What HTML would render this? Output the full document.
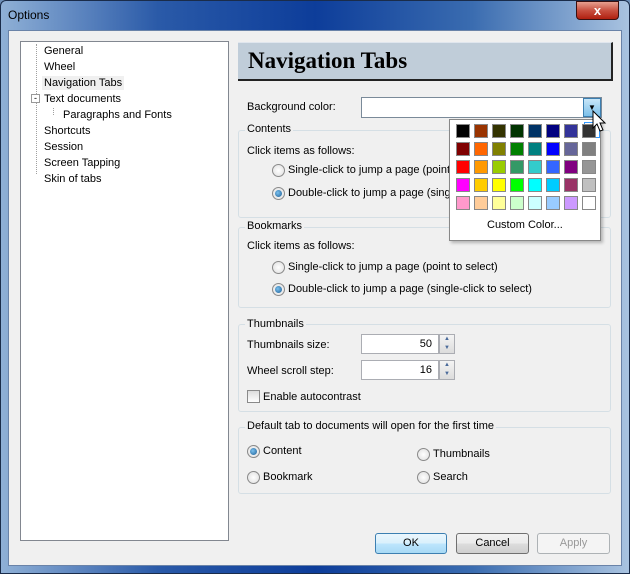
<!DOCTYPE html>
<html><head><style>
*{box-sizing:border-box;margin:0;padding:0}
body{width:630px;height:574px;overflow:hidden;font:11px "Liberation Sans",sans-serif;color:#000;background:#6d8fb8;position:relative}
.a{position:absolute;white-space:nowrap}
.frame{left:0;top:0;width:630px;height:574px;background:linear-gradient(90deg,#8fb0d6 0%,#2a5aa8 25%,#0d3d9a 50%,#3a6cb0 75%,#a9c3e0 100%);border:1px solid #1a2c4a;border-radius:6px 6px 0 0}
.client{left:8px;top:30px;width:614px;height:536px;background:#f0f0f0;border:1px solid #6a83a8}
.grp{border:1px solid #d5dfe5;border-radius:3px}
.rad{width:13px;height:13px;border-radius:50%;border:1px solid #8a8a8a;background:radial-gradient(circle,#fff,#ddd)}
.rad.on::after{content:"";position:absolute;left:2px;top:2px;width:7px;height:7px;border-radius:50%;background:radial-gradient(circle at 40% 40%,#7ac0ee,#1b5d94)}
.btn{height:21px;border:1px solid #707070;border-radius:3px;background:linear-gradient(#f2f2f2,#ebebeb 50%,#dddddd 50%,#cfcfcf);text-align:center;line-height:19px;font-size:11px}
.edit{background:#fff;border:1px solid #abadb3;height:20px;text-align:right;padding-right:6px;line-height:18px}
.spin{width:16px;height:20px;border:1px solid #abadb3;background:linear-gradient(#f4f4f4,#dcdcdc);font-size:6px;line-height:9px;text-align:center;color:#4a6a9a}
.sw{width:14px;height:14px;border:1px solid #888}
</style></head><body>
<div class="a frame"></div>
<div class="a" style="left:8px;top:8px;color:#000;font-size:12px">Options</div>
<div class="a" style="left:576px;top:1px;width:43px;height:19px;border:1px solid #3a1010;border-radius:0 0 4px 4px;background:linear-gradient(#e8a090,#c85040 50%,#b02010);color:#fff;font-weight:bold;text-align:center;line-height:17px;font-size:13px">x</div>
<div class="a client"></div>
<div class="a" style="left:20px;top:41px;width:209px;height:500px;background:#fff;border:1px solid #828790"></div>
<div class="a" style="left:36px;top:44px;height:130px;border-left:1px dotted #a0a0a0"></div>
<div class="a" style="left:44px;top:45px">General</div>
<div class="a" style="left:44px;top:61px">Wheel</div>
<div class="a" style="left:42px;top:76px;background:#f0f0f0;padding:1px 2px">Navigation Tabs</div>
<div class="a" style="left:31px;top:94px;width:9px;height:9px;border:1px solid #999;background:#fff;font-size:9px;line-height:6px;text-align:center">-</div>
<div class="a" style="left:44px;top:93px">Text documents</div>
<div class="a" style="left:53px;top:108px;width:1px;height:7px;border-left:1px dotted #a0a0a0"></div>
<div class="a" style="left:63px;top:109px">Paragraphs and Fonts</div>
<div class="a" style="left:44px;top:125px">Shortcuts</div>
<div class="a" style="left:44px;top:141px">Session</div>
<div class="a" style="left:44px;top:157px">Screen Tapping</div>
<div class="a" style="left:44px;top:173px">Skin of tabs</div>
<div class="a" style="left:238px;top:42px;width:375px;height:39px;background:#c0cdd9;border-right:2px solid #222;border-bottom:2px solid #222;border-top:1px solid #e0e6ee"></div>
<div class="a" style="left:248px;top:44px;font:bold 23px 'Liberation Serif',serif;line-height:34px">Navigation Tabs</div>
<div class="a" style="left:247px;top:101px">Background color:</div>
<div class="a" style="left:361px;top:97px;width:241px;height:21px;background:#fff;border:1px solid #7a8a99"></div>
<div class="a" style="left:583px;top:98px;width:18px;height:19px;background:linear-gradient(#c8e6f8,#7cc0ea);border:1px solid #3c7fb1;text-align:center;font-size:8px;line-height:17px">▼</div>
<div class="a grp" style="left:238px;top:130px;width:373px;height:88px"></div>
<div class="a" style="left:245px;top:123px;background:#f0f0f0;padding:0 2px">Contents</div>
<div class="a" style="left:247px;top:145px">Click items as follows:</div>
<div class="a rad" style="left:272px;top:164px"></div>
<div class="a" style="left:288px;top:164px">Single-click to jump a page (point to select)</div>
<div class="a rad on" style="left:272px;top:187px"></div>
<div class="a" style="left:288px;top:187px">Double-click to jump a page (single-click to select)</div>
<div class="a grp" style="left:238px;top:227px;width:373px;height:81px"></div>
<div class="a" style="left:245px;top:220px;background:#f0f0f0;padding:0 2px">Bookmarks</div>
<div class="a" style="left:247px;top:240px">Click items as follows:</div>
<div class="a rad" style="left:272px;top:261px"></div>
<div class="a" style="left:288px;top:261px">Single-click to jump a page (point to select)</div>
<div class="a rad on" style="left:272px;top:283px"></div>
<div class="a" style="left:288px;top:283px">Double-click to jump a page (single-click to select)</div>
<div class="a grp" style="left:238px;top:324px;width:373px;height:88px"></div>
<div class="a" style="left:245px;top:318px;background:#f0f0f0;padding:0 2px">Thumbnails</div>
<div class="a" style="left:247px;top:339px">Thumbnails size:</div>
<div class="a edit" style="left:361px;top:334px;width:78px">50</div>
<div class="a spin" style="left:439px;top:334px">▲<br>▼</div>
<div class="a" style="left:247px;top:365px">Wheel scroll step:</div>
<div class="a edit" style="left:361px;top:360px;width:78px">16</div>
<div class="a spin" style="left:439px;top:360px">▲<br>▼</div>
<div class="a" style="left:247px;top:390px;width:13px;height:13px;border:1px solid #8a8a8a;background:linear-gradient(#ddd,#fff)"></div>
<div class="a" style="left:263px;top:391px">Enable autocontrast</div>
<div class="a grp" style="left:238px;top:427px;width:373px;height:67px"></div>
<div class="a" style="left:245px;top:420px;background:#f0f0f0;padding:0 2px">Default tab to documents will open for the first time</div>
<div class="a rad on" style="left:247px;top:445px"></div>
<div class="a" style="left:263px;top:445px">Content</div>
<div class="a rad" style="left:247px;top:471px"></div>
<div class="a" style="left:263px;top:471px">Bookmark</div>
<div class="a rad" style="left:417px;top:448px"></div>
<div class="a" style="left:433px;top:448px">Thumbnails</div>
<div class="a rad" style="left:417px;top:471px"></div>
<div class="a" style="left:433px;top:471px">Search</div>
<div class="a btn" style="left:375px;top:533px;width:72px;border-color:#3c7fb1;background:linear-gradient(#eaf6fd,#d9f0fc 50%,#bee6fd 50%,#a7d9f5)">OK</div>
<div class="a btn" style="left:456px;top:533px;width:73px">Cancel</div>
<div class="a btn" style="left:537px;top:533px;width:73px;color:#999;border-color:#adb2b5;background:#f4f4f4">Apply</div>
<div class="a" style="left:449px;top:119px;width:152px;height:122px;background:#fff;border:1px solid #888;box-shadow:2px 2px 3px rgba(0,0,0,.25)"></div>
<div class="a" style="left:584px;top:122px;width:16px;height:16px;border:1px solid #3399ff"></div>
<div id="g"></div>
<div class="a" style="left:487px;top:219px">Custom Color...</div>
<script>
var c=["000000","993300","333300","003300","003366","000080","333399","333333","800000","FF6600","808000","008000","008080","0000FF","666699","808080","FF0000","FF9900","99CC00","339966","33CCCC","3366FF","800080","969696","FF00FF","FFCC00","FFFF00","00FF00","00FFFF","00CCFF","993366","C0C0C0","FF99CC","FFCC99","FFFF99","CCFFCC","CCFFFF","99CCFF","CC99FF","FFFFFF"],h="";
for(var i=0;i<40;i++){h+='<div class="a sw" style="left:'+(456+(i%8)*18)+'px;top:'+(124+Math.floor(i/8)*18)+'px;background:#'+c[i]+'"></div>';}
document.getElementById("g").outerHTML=h;
</script>
<svg class="a" style="left:592px;top:110px" width="16" height="24" viewBox="0 0 16 24"><path d="M1 1 L1 18 L5 14 L8 21 L11 20 L8 13 L13 13 Z" fill="#fff" stroke="#000" stroke-width="1"/></svg>
</body></html>
